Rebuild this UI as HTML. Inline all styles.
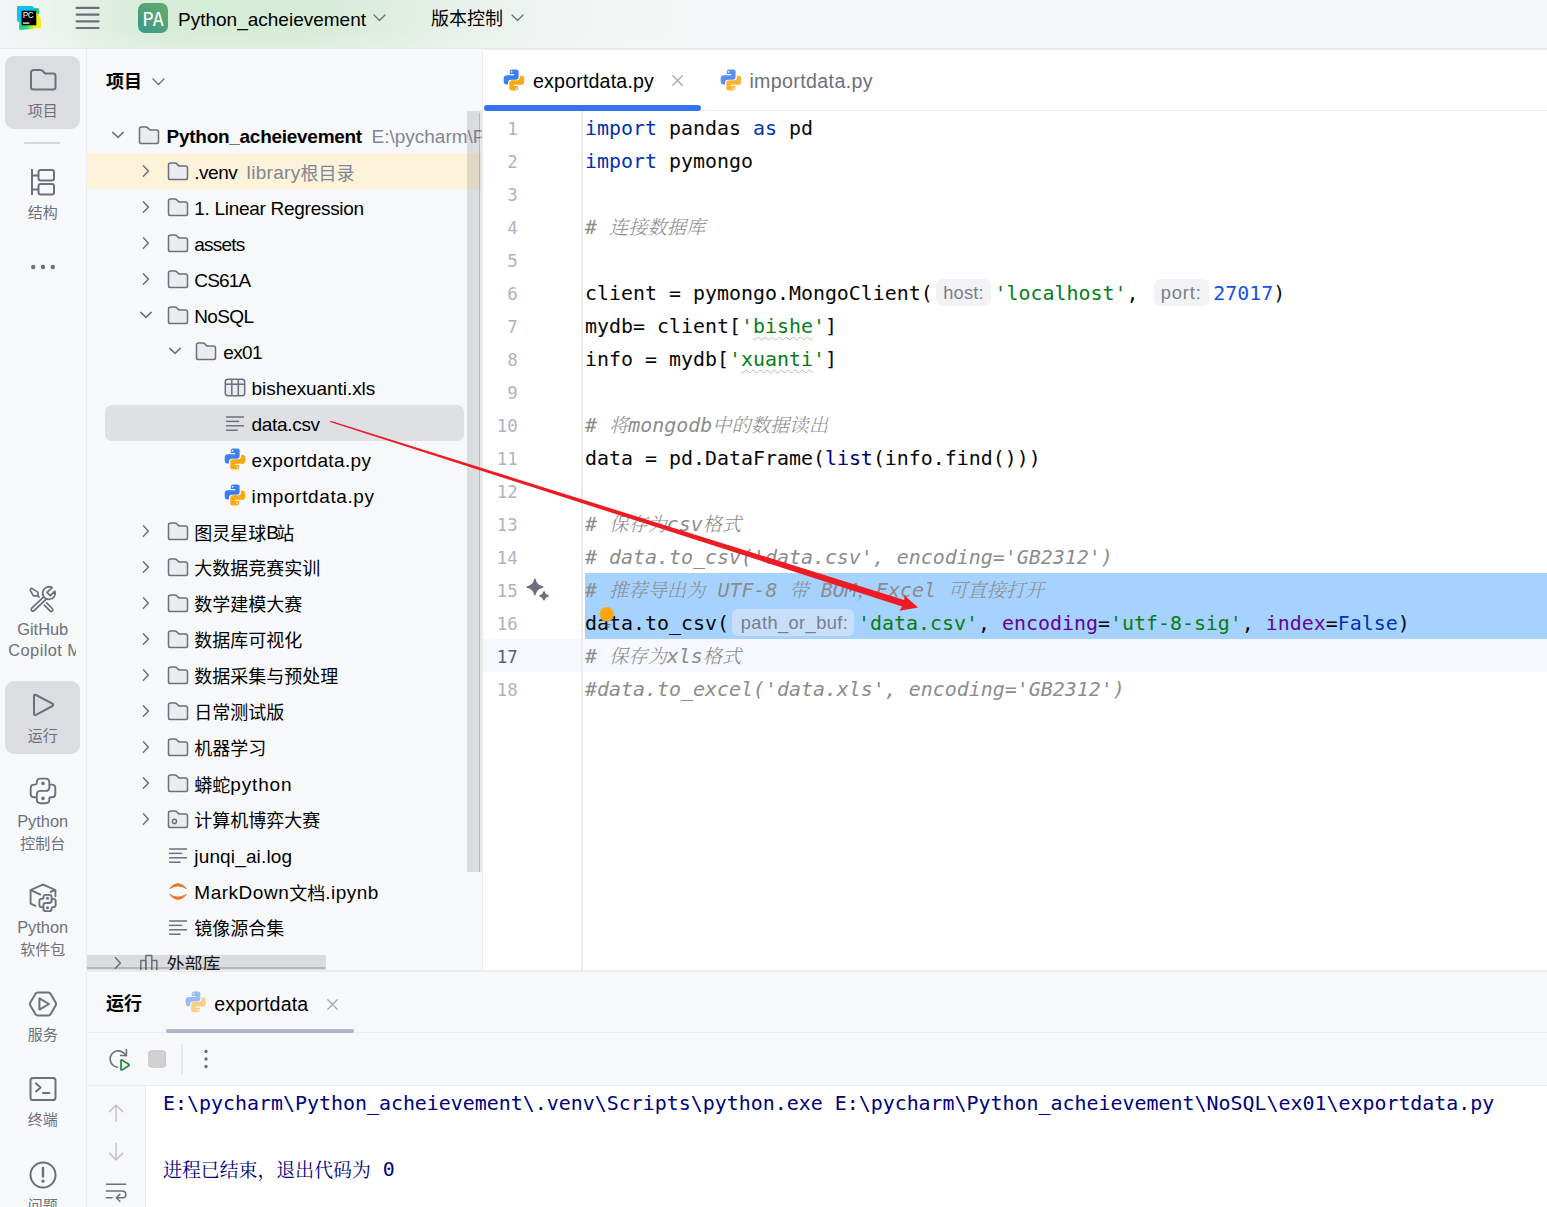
<!DOCTYPE html>
<html lang="zh-CN">
<head>
<meta charset="utf-8">
<title>exportdata.py</title>
<style>
*{box-sizing:border-box;margin:0;padding:0}
html,body{width:1547px;height:1207px;overflow:hidden;background:#f7f8fa}
body{position:relative;font-family:"Liberation Sans","Noto Sans CJK SC",sans-serif;font-size:18px;color:#000}
.abs{position:absolute}
svg{position:absolute;overflow:visible}
/* ---------- top bar ---------- */
#topbar{left:0;top:0;width:1547px;height:48px;background:
 linear-gradient(to bottom,rgba(246,247,249,0) 0%,rgba(246,247,249,0) 60%,rgba(246,247,249,.25) 100%),
 linear-gradient(to right,#f3f5f7 0px,#eef4f0 50px,#e3f0e5 90px,#d9edda 135px,#d5ecd7 200px,#d6ecd8 300px,#deeee0 390px,#e8f1ea 460px,#f0f4f2 540px,#f4f6f6 620px,#f5f6f7 700px,#f5f6f8 1547px)}
#topline{left:0;top:48px;width:1547px;height:1.2px;background:#e7e8ed}
#topline2{left:483px;top:49px;width:1064px;height:1px;background:#ebecf0}
.tb-txt{top:0;height:38px;line-height:39.2px;white-space:nowrap}
/* ---------- left strip ---------- */
#strip{left:0;top:49px;width:87px;height:1158px;background:#f7f8fa;border-right:1px solid #ebecf0}
.sbtn{left:5px;width:75px;border-radius:9px;background:#dcdde0}
.slbl{left:-0.8px;width:87px;text-align:center;color:#6c707e;font-size:15px;line-height:21px;white-space:nowrap;overflow:hidden}
/* ---------- project panel ---------- */
#proj{left:87px;top:50px;width:396px;height:920px;background:#f7f8fa;border-right:1px solid #ebecf0;overflow:hidden;box-shadow:0 -1px 0 #f7f8fa}
.row{position:absolute;left:0;width:396px;height:36px;line-height:35px;white-space:nowrap;font-size:18px}
.row .t{position:absolute;top:1.5px}
.row .l{font-size:19px}
.row .c{font-size:18px;position:relative;top:1.3px}
.row .b{font-weight:700}
.gray{color:#818594}
/* ---------- editor ---------- */
#editor{left:483px;top:50px;width:1064px;height:920px;background:#fff}
#tabline{left:483px;top:110px;width:1064px;height:1px;background:#ebecf0}
.tab{top:50px;height:60px;line-height:62.6px;font-size:19.6px;white-space:nowrap}
#gutline{left:581px;top:111px;width:2px;height:859px;background:#ebecf0}
.ln{position:absolute;left:469.2px;width:48.6px;text-align:right;height:33px;line-height:36.2px;font-family:"DejaVu Sans Mono","Liberation Mono",monospace;font-size:17.4px;color:#aeb3c2;letter-spacing:0;white-space:pre}
.cl{position:absolute;left:585px;height:33px;line-height:36.2px;white-space:pre;font-family:"DejaVu Sans Mono","Liberation Mono",monospace;font-size:19.93px;color:#080808}
.kw{color:#0033b3}.st{color:#067d17}.nu{color:#1750eb}.na{color:#660099}.bi{color:#000080}
.cm{color:#8c8c8c;font-style:italic}
.zh{font-family:"Noto Serif CJK SC",serif;font-size:19.3px;font-weight:300;letter-spacing:0;line-height:1px}
.wv{text-decoration:underline wavy #9fcb9d 1px;text-underline-offset:3.2px;text-decoration-skip-ink:none}
.hint{display:inline-block;vertical-align:top;height:26.6px;line-height:27.6px;margin:3px 4.5px 0 3.2px;border-radius:6px;background:#f2f3f5;color:#7a7e8a;font-family:"Liberation Sans",sans-serif;font-size:18.3px;font-style:normal;text-align:center;overflow:hidden}
.hint.hs{background:#c8dffb;margin-top:2.8px;height:27.2px;line-height:28px;padding-left:3.4px}
/* ---------- bottom panel ---------- */
#bottom{left:87px;top:969.6px;width:1460px;height:238px;background:#f7f8fa;border-top:2px solid #ebecf0}
.con{position:absolute;left:163px;height:33px;line-height:36.2px;white-space:pre;font-family:"DejaVu Sans Mono","Liberation Mono",monospace;font-size:19.93px;color:#00007f}
.czh{font-family:"Noto Serif CJK SC",serif;font-size:18.9px;font-weight:400;line-height:1px;position:relative;top:1px}
</style>
</head>
<body>

<!-- ================= TOP BAR ================= -->
<div id="topbar" class="abs"></div>
<div id="topline" class="abs"></div>
<div id="topline2" class="abs"></div>

<!-- PyCharm logo -->
<svg style="left:0;top:0" width="48" height="36" viewBox="0 0 48 36">
  <defs>
    <linearGradient id="pcg2" x1="19" y1="28" x2="41" y2="22" gradientUnits="userSpaceOnUse"><stop offset="0" stop-color="#12d48a"/><stop offset=".3" stop-color="#21d789"/><stop offset=".62" stop-color="#e6f31c"/><stop offset="1" stop-color="#f7f014"/></linearGradient>
  </defs>
  <path d="M20 9 Q20 8 21 8 L37.5 8 Q39 8 39 9.5 L39 14 L40.6 18.5 Q41 19.5 41 20.5 L41 27 Q41 28 40 28.1 L21 29.9 Q19 30 19 28.5 Z" fill="url(#pcg2)"/>
  <path d="M33 8 L37.5 8 Q39 8 39 9.5 L39 15 L36 12 Z" fill="#14d58b"/>
  <path d="M18.2 6 L31.6 6 Q32.6 6 33.2 6.8 L34.3 8.3 L36 11 L36 14 L22 22.5 L19.5 22 L18 21.4 Q17 20.8 17 19.8 L17 7.2 Q17 6 18.2 6 Z" fill="#08c3f2"/>
  <rect x="21.6" y="10.7" width="14.7" height="14.6" fill="#000"/>
  <text x="22.8" y="17.9" font-family="Liberation Sans,sans-serif" font-weight="400" font-size="8.3" fill="#fff" letter-spacing="-0.5">PC</text>
  <rect x="23" y="22.3" width="6.4" height="1.6" fill="#cfcfcf"/>
</svg>

<!-- hamburger -->
<svg style="left:0;top:0" width="120" height="36" viewBox="0 0 120 36">
  <g stroke="#6c707e" stroke-width="2.2" stroke-linecap="round">
    <line x1="76.6" y1="7.9" x2="98.6" y2="7.9"/><line x1="76.6" y1="14.6" x2="98.6" y2="14.6"/>
    <line x1="76.6" y1="21.3" x2="98.6" y2="21.3"/><line x1="76.6" y1="28" x2="98.6" y2="28"/>
  </g>
</svg>

<!-- PA badge -->
<svg style="left:138px;top:3px" width="30" height="30" viewBox="0 0 30 30">
  <defs><linearGradient id="pag" x1="0" y1="1" x2="1" y2="0"><stop offset="0" stop-color="#3b978f"/><stop offset="1" stop-color="#63ad67"/></linearGradient></defs>
  <rect x="0" y="0" width="30" height="30" rx="7" fill="url(#pag)"/>
  <text x="4.2" y="23.2" font-family="DejaVu Sans Mono,Liberation Mono,monospace" font-size="19" fill="#fff" textLength="21.8" lengthAdjust="spacing">PA</text>
</svg>

<div class="abs tb-txt" style="left:178px;font-size:19px">Python_acheievement</div>
<svg style="left:373px;top:14px" width="13" height="8" viewBox="0 0 13 8"><path d="M1 1 L6.5 6.5 L12 1" fill="none" stroke="#6c707e" stroke-width="1.4" stroke-linecap="round" stroke-linejoin="round"/></svg>
<div class="abs tb-txt" style="left:431px;font-size:18px">版本控制</div>
<svg style="left:511px;top:14px" width="13" height="8" viewBox="0 0 13 8"><path d="M1 1 L6.5 6.5 L12 1" fill="none" stroke="#6c707e" stroke-width="1.4" stroke-linecap="round" stroke-linejoin="round"/></svg>

<!-- ================= LEFT STRIP ================= -->
<div id="strip" class="abs"></div>

<div class="abs sbtn" style="top:55.6px;height:73px"></div>
<div class="abs sbtn" style="top:681px;height:73px"></div>
<svg style="left:0;top:50px" width="87" height="1157" viewBox="0 50 87 1157" fill="none" stroke="#6c707e" stroke-width="2" stroke-linecap="round" stroke-linejoin="round">
  <!-- project folder -->
  <path d="M31 72.5 Q31 70 33.5 70 L40.5 70 Q41.6 70 42.4 70.8 L44.6 73 Q45.2 73.6 46.2 73.6 L53 73.6 Q55.5 73.6 55.5 76 L55.5 87 Q55.5 89.5 53 89.5 L33.5 89.5 Q31 89.5 31 87 Z"/>
  <!-- separator -->
  <line x1="24.2" y1="143" x2="59.8" y2="143" stroke="#c9ccd6" stroke-width="1.6" stroke-linecap="butt"/>
  <!-- structure -->
  <path d="M32 169 L32 195 M32 175.5 L38.5 175.5 M32 189.5 L38.5 189.5" stroke-linecap="butt"/>
  <rect x="38.5" y="170" width="15.5" height="10.5" rx="2.2"/>
  <rect x="38.5" y="184" width="15.5" height="10.5" rx="2.2"/>
  <!-- dots -->
  <g fill="#6c707e" stroke="none"><circle cx="33.2" cy="267" r="2.2"/><circle cx="43" cy="267" r="2.2"/><circle cx="52.8" cy="267" r="2.2"/></g>
  <!-- tools: wrench + screwdriver -->
  <g>
    <line x1="44.6" y1="598.4" x2="32.9" y2="609.4" stroke="#6c707e" stroke-width="5.1"/>
    <line x1="46" y1="597" x2="32.9" y2="609.4" stroke="#f7f8fa" stroke-width="1.7"/>
    <path d="M52.2 587.7 L47 592.4 L50.3 595.7 L54.9 591.1 A6.3 6.3 0 1 1 52.2 587.7 Z" fill="#f7f8fa" stroke-width="1.8"/>
    <path d="M46.1 602.3 L52.3 608.5 A1.6 1.6 0 0 1 50 610.8 L43.8 604.6" stroke-width="1.7" stroke-linecap="butt"/>
    <path d="M31.8 588.4 L37.5 591.9 Q38 592.2 38 592.8 L38 595.9 L34 595.9 Q33.4 595.9 33.1 595.4 L30.4 590.6 Q29.7 589.2 31.8 588.4 Z M38 595.9 L39 597" stroke-width="1.7"/>
  </g>
  <!-- run play -->
  <path d="M34 696.2 Q34 694 36 695 L52.4 703.6 Q54.2 704.8 52.4 706 L36 714.8 Q34 715.8 34 713.6 Z"/>
  <!-- python console -->
  <g transform="translate(43,790.9)" stroke-width="1.9">
    <path d="M-9 -6.3 L-7.7 -6.3 Q-6.2 -6.3 -6.2 -7.8 L-6.2 -8.6 Q-6.2 -12.3 -2.5 -12.3 L2.6 -12.3 Q6.3 -12.3 6.3 -8.6 L6.3 -3.7 Q6.3 0 2.6 0 L-2.5 0 Q-6.2 0 -6.2 3.7 L-6.2 8.6 Q-6.2 12.3 -2.5 12.3 L2.6 12.3 Q6.3 12.3 6.3 8.6 L6.3 7.8 Q6.3 6.3 7.8 6.3 L9 6.3 Q12.3 6.3 12.3 3 L12.3 -3 Q12.3 -6.3 9 -6.3 L6.3 -6.3 M-9 -6.3 Q-12.3 -6.3 -12.3 -3 L-12.3 3 Q-12.3 6.3 -9 6.3 L-6.2 6.3"/>
    <circle cx="0" cy="-7.5" r="1.8" fill="#6c707e" stroke="none"/><circle cx="0" cy="7.5" r="1.8" fill="#6c707e" stroke="none"/>
  </g>
  <!-- python packages -->
  <g stroke-width="1.9">
    <path d="M35.4 905.8 L30.6 903.6 L30.6 890 L43 884.6 L55.4 890 L55.4 896.2" stroke-linejoin="miter"/>
    <path d="M30.8 890.1 L41 894.8 M55.2 890.1 L50 892" stroke-linecap="butt"/>
    <g transform="translate(47.5,903) scale(.66)" stroke-width="2.9">
      <path d="M-9 -6.3 L-7.7 -6.3 Q-6.2 -6.3 -6.2 -7.8 L-6.2 -8.6 Q-6.2 -12.3 -2.5 -12.3 L2.6 -12.3 Q6.3 -12.3 6.3 -8.6 L6.3 -3.7 Q6.3 0 2.6 0 L-2.5 0 Q-6.2 0 -6.2 3.7 L-6.2 8.6 Q-6.2 12.3 -2.5 12.3 L2.6 12.3 Q6.3 12.3 6.3 8.6 L6.3 7.8 Q6.3 6.3 7.8 6.3 L9 6.3 Q12.3 6.3 12.3 3 L12.3 -3 Q12.3 -6.3 9 -6.3 L6.3 -6.3 M-9 -6.3 Q-12.3 -6.3 -12.3 -3 L-12.3 3 Q-12.3 6.3 -9 6.3 L-6.2 6.3"/>
      <circle cx="0" cy="-7.1" r="2.3" fill="#6c707e" stroke="none"/><circle cx="0" cy="7.1" r="2.3" fill="#6c707e" stroke="none"/>
    </g>
  </g>
  <!-- services -->
  <path d="M37.6 992.6 L48.4 992.6 Q49.8 992.6 50.5 993.8 L55.8 1002.8 Q56.5 1004 55.8 1005.2 L50.5 1014.2 Q49.8 1015.4 48.4 1015.4 L37.6 1015.4 Q36.2 1015.4 35.5 1014.2 L30.2 1005.2 Q29.5 1004 30.2 1002.8 L35.5 993.8 Q36.2 992.6 37.6 992.6 Z"/>
  <path d="M39.4 998.4 L39.4 1009.6 L49 1004 Z"/>
  <!-- terminal -->
  <rect x="30.5" y="1078" width="25" height="22" rx="2.6"/>
  <path d="M36 1083.4 L40.6 1087.4 L36 1091.4 M43 1093 L49.4 1093"/>
  <!-- problems -->
  <circle cx="43" cy="1175" r="12.5"/>
  <path d="M43 1168 L43 1176.4" stroke-width="2.4"/><circle cx="43" cy="1181.2" r="1.6" fill="#6c707e" stroke="none"/>
</svg>
<div class="abs slbl" style="top:100px">项目</div>
<div class="abs slbl" style="top:201.5px">结构</div>
<div class="abs slbl" style="top:619px;font-size:16.4px">GitHub</div>
<div class="abs slbl" style="top:640px;left:0;font-size:16.4px;width:76.4px;text-align:left;padding-left:8.3px;letter-spacing:.42px">Copilot M</div>
<div class="abs slbl" style="top:724.5px">运行</div>
<div class="abs slbl" style="top:811px;font-size:16.4px">Python</div>
<div class="abs slbl" style="top:832.5px">控制台</div>
<div class="abs slbl" style="top:917px;font-size:16.4px">Python</div>
<div class="abs slbl" style="top:938.5px">软件包</div>
<div class="abs slbl" style="top:1024px">服务</div>
<div class="abs slbl" style="top:1109px">终端</div>
<div class="abs slbl" style="top:1195.2px">问题</div>
<!--STRIP-->

<!-- ================= PROJECT PANEL ================= -->
<div id="proj" class="abs">
<div class="abs" style="left:19px;top:17.7px;height:28px;line-height:28px;font-size:18px;font-weight:700">项目</div>
<svg style="left:65px;top:27.8px" width="13" height="8" viewBox="0 0 13 8"><path d="M1 1 L6.5 6.5 L12 1" fill="none" stroke="#6c707e" stroke-width="1.4" stroke-linecap="round" stroke-linejoin="round"/></svg>
<!--PROJ-->
<svg width="0" height="0" style="position:absolute"><defs>
<symbol id="i-folder" viewBox="0 0 22 19"><path d="M1.5 3.1 Q1.5 1 3.6 1 L8 1 Q8.9 1 9.5 1.6 L11.3 3.4 Q12 4.1 13 4.1 L18.4 4.1 Q20.5 4.1 20.5 6.2 L20.5 15.4 Q20.5 17.5 18.4 17.5 L3.6 17.5 Q1.5 17.5 1.5 15.4 Z" fill="#ebecf0" stroke="#6c707e" stroke-width="1.5" stroke-linejoin="round"/></symbol>
<symbol id="i-folderdot" viewBox="0 0 22 19"><path d="M1.5 3.1 Q1.5 1 3.6 1 L8 1 Q8.9 1 9.5 1.6 L11.3 3.4 Q12 4.1 13 4.1 L18.4 4.1 Q20.5 4.1 20.5 6.2 L20.5 15.4 Q20.5 17.5 18.4 17.5 L3.6 17.5 Q1.5 17.5 1.5 15.4 Z" fill="#ebecf0" stroke="#6c707e" stroke-width="1.5" stroke-linejoin="round"/><circle cx="7.4" cy="11.4" r="2.1" fill="none" stroke="#6c707e" stroke-width="1.4"/></symbol>
<symbol id="i-py" viewBox="0 0 22 22"><path id="pyhalf" d="M6.8 2.7 Q6.8 0.5 9.6 0.5 L12.8 0.5 Q15.6 0.5 15.6 2.7 L15.6 8 Q15.6 10.8 12.6 10.8 L8.3 10.8 Q5 10.8 5 13.6 L5 15.4 L3.3 15.4 Q0.7 15.4 0.7 12.2 L0.7 9.8 Q0.7 6.2 3.7 6.2 L11.1 6.2 L11.1 5 L6.8 5 Z" fill="#3d7ef4"/><circle cx="8.6" cy="2.75" r=".85" fill="#fff"/><path d="M6.8 2.7 Q6.8 0.5 9.6 0.5 L12.8 0.5 Q15.6 0.5 15.6 2.7 L15.6 8 Q15.6 10.8 12.6 10.8 L8.3 10.8 Q5 10.8 5 13.6 L5 15.4 L3.3 15.4 Q0.7 15.4 0.7 12.2 L0.7 9.8 Q0.7 6.2 3.7 6.2 L11.1 6.2 L11.1 5 L6.8 5 Z" fill="#fea70f" transform="rotate(180 10.96 11.03)"/><circle cx="13.35" cy="19.3" r=".85" fill="#fff"/></symbol>
<symbol id="i-lines" viewBox="0 0 22 19"><g stroke="#6c707e" stroke-width="1.5" stroke-linecap="butt"><line x1="2" y1="3" x2="20" y2="3"/><line x1="2" y1="7.4" x2="15.2" y2="7.4"/><line x1="2" y1="11.8" x2="20" y2="11.8"/><line x1="2" y1="16.2" x2="13.6" y2="16.2"/></g></symbol>
<symbol id="i-table" viewBox="0 0 22 19"><g fill="none" stroke="#6c707e" stroke-width="1.5"><rect x="1.3" y="1.3" width="19.4" height="16.4" rx="2.6" fill="#ebecf0"/><path d="M1.3 6.2 L20.7 6.2 M7.8 1.3 L7.8 17.7 M14.3 1.3 L14.3 17.7"/></g></symbol>
<symbol id="i-jup" viewBox="0 0 22 19"><g fill="#e8742a" stroke="#e8742a" stroke-width=".8" stroke-linejoin="round"><path d="M2.6 6.6 Q11 -3.4 19.4 6.6 Q11 1.4 2.6 6.6 Z"/><path d="M2.6 12.4 Q11 22.4 19.4 12.4 Q11 17.6 2.6 12.4 Z"/></g></symbol>
<symbol id="i-lib" viewBox="0 0 22 19"><g fill="none" stroke="#6c707e" stroke-width="1.5" stroke-linejoin="round"><path d="M1 18.5 L21 18.5"/><rect x="2.8" y="6.5" width="5" height="12"/><rect x="7.8" y="1.5" width="6" height="17"/><path d="M13.8 6.5 L18.8 6.5 L18.8 18.5"/></g></symbol>
<symbol id="i-chr" viewBox="0 0 8 14"><path d="M1.4 1.8 L6.4 7 L1.4 12.2" fill="none" stroke="#6c707e" stroke-width="1.5" stroke-linecap="round" stroke-linejoin="round"/></symbol>
<symbol id="i-chd" viewBox="0 0 14 8"><path d="M1.8 1.4 L7 6.4 L12.2 1.4" fill="none" stroke="#6c707e" stroke-width="1.5" stroke-linecap="round" stroke-linejoin="round"/></symbol>
</defs></svg>
<div class="abs" style="left:0;top:103px;width:396px;height:36px;background:#fdf3da"></div>
<div class="abs" style="left:18px;top:355px;width:359px;height:36px;border-radius:7px;background:#dfe0e4"></div>
<div class="row" style="top:67px"><svg style="left:24.0px;top:14.4px" width="14" height="8"><use href="#i-chd"/></svg><svg style="left:51.4px;top:8.6px" width="22" height="19"><use href="#i-folder"/></svg><span class="t" style="left:79.6px"><span class="l b" style="letter-spacing:-0.28px">Python_acheievement</span><span style="display:inline-block;width:9.6px"></span><span class="l gray">E:\pycharm\Python_acheievement</span></span></div>
<div class="row" style="top:103px"><svg style="left:55.0px;top:11px" width="8" height="14"><use href="#i-chr"/></svg><svg style="left:80.4px;top:8.6px" width="22" height="19"><use href="#i-folder"/></svg><span class="t" style="left:107.3px"><span class="l" style="letter-spacing:-0.48px">.venv</span><span style="display:inline-block;width:9.3px"></span><span class="l gray" style="letter-spacing:0.32px">library</span><span class="c gray">根目录</span></span></div>
<div class="row" style="top:139px"><svg style="left:55.0px;top:11px" width="8" height="14"><use href="#i-chr"/></svg><svg style="left:80.4px;top:8.6px" width="22" height="19"><use href="#i-folder"/></svg><span class="t" style="left:107.3px"><span class="l" style="letter-spacing:-0.29px">1. Linear Regression</span></span></div>
<div class="row" style="top:175px"><svg style="left:55.0px;top:11px" width="8" height="14"><use href="#i-chr"/></svg><svg style="left:80.4px;top:8.6px" width="22" height="19"><use href="#i-folder"/></svg><span class="t" style="left:107.3px"><span class="l" style="letter-spacing:-0.77px">assets</span></span></div>
<div class="row" style="top:211px"><svg style="left:55.0px;top:11px" width="8" height="14"><use href="#i-chr"/></svg><svg style="left:80.4px;top:8.6px" width="22" height="19"><use href="#i-folder"/></svg><span class="t" style="left:107.3px"><span class="l" style="letter-spacing:-0.80px">CS61A</span></span></div>
<div class="row" style="top:247px"><svg style="left:51.8px;top:14.4px" width="14" height="8"><use href="#i-chd"/></svg><svg style="left:80.4px;top:8.6px" width="22" height="19"><use href="#i-folder"/></svg><span class="t" style="left:107.3px"><span class="l" style="letter-spacing:-0.66px">NoSQL</span></span></div>
<div class="row" style="top:283px"><svg style="left:81.0px;top:14.4px" width="14" height="8"><use href="#i-chd"/></svg><svg style="left:108.4px;top:8.6px" width="22" height="19"><use href="#i-folder"/></svg><span class="t" style="left:136.3px"><span class="l" style="letter-spacing:-0.68px">ex01</span></span></div>
<div class="row" style="top:319px"><svg style="left:136.8px;top:8.6px" width="22" height="19"><use href="#i-table"/></svg><span class="t" style="left:164.6px"><span class="l" style="letter-spacing:-0.07px">bishexuanti.xls</span></span></div>
<div class="row" style="top:355px"><svg style="left:136.8px;top:8.6px" width="22" height="19"><use href="#i-lines"/></svg><span class="t" style="left:164.6px"><span class="l" style="letter-spacing:-0.32px">data.csv</span></span></div>
<div class="row" style="top:391px"><svg style="left:136.8px;top:7px" width="22" height="22"><use href="#i-py"/></svg><span class="t" style="left:164.6px"><span class="l" style="letter-spacing:0.35px">exportdata.py</span></span></div>
<div class="row" style="top:427px"><svg style="left:136.8px;top:7px" width="22" height="22"><use href="#i-py"/></svg><span class="t" style="left:164.6px"><span class="l" style="letter-spacing:0.61px">importdata.py</span></span></div>
<div class="row" style="top:463px"><svg style="left:55.0px;top:11px" width="8" height="14"><use href="#i-chr"/></svg><svg style="left:80.4px;top:8.6px" width="22" height="19"><use href="#i-folder"/></svg><span class="t" style="left:107.3px"><span class="c">图灵星球</span><span class="l" style="letter-spacing:-2.69px">B</span><span class="c">站</span></span></div>
<div class="row" style="top:499px"><svg style="left:55.0px;top:11px" width="8" height="14"><use href="#i-chr"/></svg><svg style="left:80.4px;top:8.6px" width="22" height="19"><use href="#i-folder"/></svg><span class="t" style="left:107.3px"><span class="c">大数据竞赛实训</span></span></div>
<div class="row" style="top:535px"><svg style="left:55.0px;top:11px" width="8" height="14"><use href="#i-chr"/></svg><svg style="left:80.4px;top:8.6px" width="22" height="19"><use href="#i-folder"/></svg><span class="t" style="left:107.3px"><span class="c">数学建模大赛</span></span></div>
<div class="row" style="top:571px"><svg style="left:55.0px;top:11px" width="8" height="14"><use href="#i-chr"/></svg><svg style="left:80.4px;top:8.6px" width="22" height="19"><use href="#i-folder"/></svg><span class="t" style="left:107.3px"><span class="c">数据库可视化</span></span></div>
<div class="row" style="top:607px"><svg style="left:55.0px;top:11px" width="8" height="14"><use href="#i-chr"/></svg><svg style="left:80.4px;top:8.6px" width="22" height="19"><use href="#i-folder"/></svg><span class="t" style="left:107.3px"><span class="c">数据采集与预处理</span></span></div>
<div class="row" style="top:643px"><svg style="left:55.0px;top:11px" width="8" height="14"><use href="#i-chr"/></svg><svg style="left:80.4px;top:8.6px" width="22" height="19"><use href="#i-folder"/></svg><span class="t" style="left:107.3px"><span class="c">日常测试版</span></span></div>
<div class="row" style="top:679px"><svg style="left:55.0px;top:11px" width="8" height="14"><use href="#i-chr"/></svg><svg style="left:80.4px;top:8.6px" width="22" height="19"><use href="#i-folder"/></svg><span class="t" style="left:107.3px"><span class="c">机器学习</span></span></div>
<div class="row" style="top:715px"><svg style="left:55.0px;top:11px" width="8" height="14"><use href="#i-chr"/></svg><svg style="left:80.4px;top:8.6px" width="22" height="19"><use href="#i-folder"/></svg><span class="t" style="left:107.3px"><span class="c">蟒蛇</span><span class="l" style="letter-spacing:0.83px">python</span></span></div>
<div class="row" style="top:751px"><svg style="left:55.0px;top:11px" width="8" height="14"><use href="#i-chr"/></svg><svg style="left:80.4px;top:8.6px" width="22" height="19"><use href="#i-folderdot"/></svg><span class="t" style="left:107.3px"><span class="c">计算机博弈大赛</span></span></div>
<div class="row" style="top:787px"><svg style="left:80.4px;top:8.6px" width="22" height="19"><use href="#i-lines"/></svg><span class="t" style="left:107.3px"><span class="l" style="letter-spacing:0.15px">junqi_ai.log</span></span></div>
<div class="row" style="top:823px"><svg style="left:80.4px;top:8.6px" width="22" height="19"><use href="#i-jup"/></svg><span class="t" style="left:107.3px"><span class="l" style="letter-spacing:0.52px">MarkDown</span><span class="c">文档</span><span class="l" style="letter-spacing:0.47px">.ipynb</span></span></div>
<div class="row" style="top:859px"><svg style="left:80.4px;top:8.6px" width="22" height="19"><use href="#i-lines"/></svg><span class="t" style="left:107.3px"><span class="c">镜像源合集</span></span></div>
<div class="row" style="top:895px"><svg style="left:27.2px;top:11px" width="8" height="14"><use href="#i-chr"/></svg><svg style="left:51.4px;top:8.6px" width="22" height="19"><use href="#i-lib"/></svg><span class="t" style="left:79.6px"><span class="c">外部库</span></span></div>
<div class="abs" style="left:380px;top:61px;width:15px;height:761px;background:rgba(110,110,116,.2);border-right:2px solid rgba(255,255,255,.35)"><div class="abs" style="right:0;top:2px;width:1.5px;height:759px;background:rgba(60,60,66,.22)"></div></div>
<div class="abs" style="left:0;top:905px;width:238.8px;height:14.6px;background:rgba(110,110,116,.2)"><div class="abs" style="left:0;bottom:1px;width:238px;height:1.5px;background:rgba(60,60,66,.22)"></div></div>
<!--/PROJ-->
</div>

<!-- ================= EDITOR ================= -->
<div id="editor" class="abs"></div>
<!--TABS-->
<div id="tabline" class="abs"></div>
<div class="abs" style="left:483.5px;top:104.6px;width:217.5px;height:6px;border-radius:3px;background:#3574f0"></div>
<svg style="left:503px;top:69px" width="22" height="22"><use href="#i-py"/></svg>
<div class="abs tab" style="left:533px;letter-spacing:.18px">exportdata.py</div>
<svg style="left:672px;top:75px" width="11" height="11" viewBox="0 0 11 11"><path d="M0.8 0.8 L10.2 10.2 M10.2 0.8 L0.8 10.2" stroke="#a3a7b5" stroke-width="1.3" stroke-linecap="round"/></svg>
<svg style="left:719.5px;top:69px;opacity:.86" width="22" height="22"><use href="#i-py"/></svg>
<div class="abs tab" style="left:749.4px;letter-spacing:.37px;color:#6c707e">importdata.py</div>
<!--/TABS-->
<!--EDITOR-->
<div class="abs" style="left:483px;top:639px;width:1064px;height:33px;background:#f5f8fe"></div>
<div class="abs" style="left:585px;top:573.4px;width:962px;height:65.4px;background:#a6d2ff"></div>
<div id="gutline" class="abs"></div>
<div class="ln" style="top:111px">1</div>
<div class="cl" style="top:111px"><span class="kw">import</span> pandas <span class="kw">as</span> pd</div>
<div class="ln" style="top:144px">2</div>
<div class="cl" style="top:144px"><span class="kw">import</span> pymongo</div>
<div class="ln" style="top:177px">3</div>
<div class="ln" style="top:210px">4</div>
<div class="cl" style="top:210px"><span class="cm"># <span class="zh">连接数据库</span></span></div>
<div class="ln" style="top:243px">5</div>
<div class="ln" style="top:276px">6</div>
<div class="cl" style="top:276px">client = pymongo.MongoClient(<span class="hint" style="width:55px;letter-spacing:0.2px;margin-right:3.5px">host:</span><span class="st">'localhost'</span>, <span class="hint" style="width:55.2px;letter-spacing:0.85px">port:</span><span class="nu">27017</span>)</div>
<div class="ln" style="top:309px">7</div>
<div class="cl" style="top:309px">mydb= client[<span class="st">'<span class="wv">bishe</span>'</span>]</div>
<div class="ln" style="top:342px">8</div>
<div class="cl" style="top:342px">info = mydb[<span class="st">'<span class="wv">xuanti</span>'</span>]</div>
<div class="ln" style="top:375px">9</div>
<div class="ln" style="top:408px">10</div>
<div class="cl" style="top:408px"><span class="cm"># <span class="zh">将</span>mongodb<span class="zh">中的数据读出</span></span></div>
<div class="ln" style="top:441px">11</div>
<div class="cl" style="top:441px">data = pd.DataFrame(<span class="bi">list</span>(info.find()))</div>
<div class="ln" style="top:474px">12</div>
<div class="ln" style="top:507px">13</div>
<div class="cl" style="top:507px"><span class="cm"># <span class="zh">保存为</span>csv<span class="zh">格式</span></span></div>
<div class="ln" style="top:540px">14</div>
<div class="cl" style="top:540px"><span class="cm"># data.to_csv('data.csv', encoding='GB2312')</span></div>
<div class="ln" style="top:573px">15</div>
<div class="cl" style="top:573px"><span class="cm"># <span class="zh">推荐导出为</span> UTF-8 <span class="zh">带</span> BOM<span class="zh">，</span>Excel <span class="zh">可直接打开</span></span></div>
<div class="ln" style="top:606px">16</div>
<div class="cl" style="top:606px">data.to_csv(<span class="hint hs" style="width:121.4px;letter-spacing:0.4px">path_or_buf:</span><span class="st">'data.csv'</span>, <span class="na">encoding</span>=<span class="st">'utf-8-sig'</span>, <span class="na">index</span>=<span class="kw">False</span>)</div>
<div class="ln" style="top:639px;color:#5a5d6b">17</div>
<div class="cl" style="top:639px"><span class="cm"># <span class="zh">保存为</span>xls<span class="zh">格式</span></span></div>
<div class="ln" style="top:672px">18</div>
<div class="cl" style="top:672px"><span class="cm">#data.to_excel('data.xls', encoding='GB2312')</span></div>
<!--/EDITOR-->

<!-- ================= BOTTOM PANEL ================= -->
<div id="bottom" class="abs"></div>
<!--BOTTOM-->
<div class="abs" style="left:87px;top:1032px;width:1460px;height:1px;background:#ebecf0"></div>
<div class="abs" style="left:87px;top:1085px;width:1460px;height:1px;background:#ebecf0"></div>
<div class="abs" style="left:146px;top:1086px;width:1401px;height:121px;background:#fff"></div>
<div class="abs" style="left:145px;top:1086px;width:1px;height:121px;background:#ebecf0"></div>
<div class="abs" style="left:106px;top:989px;height:30px;line-height:30px;font-size:18px;font-weight:700">运行</div>
<svg style="left:185.4px;top:991.2px;opacity:.5" width="21.6" height="21.6" viewBox="0 0 22 22"><use href="#i-py"/></svg>
<div class="abs" style="left:214.3px;top:989px;height:30px;line-height:31.6px;font-size:19.6px;letter-spacing:.14px;white-space:nowrap">exportdata</div>
<svg style="left:326.6px;top:998.8px" width="11" height="11" viewBox="0 0 11 11"><path d="M0.8 0.8 L10.2 10.2 M10.2 0.8 L0.8 10.2" stroke="#a3a7b5" stroke-width="1.3" stroke-linecap="round"/></svg>
<div class="abs" style="left:165.6px;top:1028.8px;width:188.8px;height:4.2px;border-radius:2.1px;background:#afb3c4"></div>
<svg style="left:87px;top:1033px" width="200" height="52" viewBox="87 1033 200 52" fill="none" stroke-linecap="round" stroke-linejoin="round">
  <!-- rerun -->
  <path d="M117.5 1067.2 A8.2 8.2 0 1 1 125.8 1055.7" stroke="#6c707e" stroke-width="1.6"/>
  <path d="M119.9 1055.5 L126.4 1055.5 L126.4 1049" stroke="#6c707e" stroke-width="1.6" stroke-linecap="butt" stroke-linejoin="miter"/>
  <path d="M121 1060.8 L121 1069.3 Q121 1070.6 122.1 1069.9 L128.7 1065.8 Q129.7 1065 128.7 1064.3 L122.1 1060.1 Q121 1059.5 121 1060.8 Z" stroke="#208a3c" stroke-width="1.7" fill="#eef8ef"/>
  <!-- stop -->
  <rect x="148.8" y="1050.7" width="16.6" height="16.6" rx="3.2" fill="#d1d1d1" stroke="#c6c6c6" stroke-width="1.1"/>
  <!-- separator -->
  <line x1="182" y1="1044" x2="182" y2="1074" stroke="#dddee4" stroke-width="1.4" stroke-linecap="butt"/>
  <!-- kebab -->
  <g fill="#6c707e" stroke="none"><circle cx="206" cy="1051.5" r="1.7"/><circle cx="206" cy="1059" r="1.7"/><circle cx="206" cy="1066.5" r="1.7"/></g>
</svg>
<svg style="left:87px;top:1086px" width="58" height="121" viewBox="87 1086 58 121" fill="none" stroke-linecap="round" stroke-linejoin="round">
  <g stroke="#c6c6c9" stroke-width="1.6">
    <path d="M116.1 1121.4 L116.1 1105 M109.6 1111.6 L116.1 1105 L122.6 1111.6"/>
    <path d="M116.1 1143.4 L116.1 1160 M109.6 1153.4 L116.1 1160 L122.6 1153.4"/>
  </g>
  <g stroke="#6c707e" stroke-width="1.6">
    <path d="M106.4 1184.3 L125.6 1184.3"/>
    <path d="M106.4 1191 L122 1191 Q125.8 1191 125.8 1194.4 Q125.8 1197.8 122 1197.8 L116.6 1197.8 M119.8 1194.4 L116.4 1197.8 L119.8 1201.2"/>
    <path d="M106.4 1197.8 L112 1197.8"/>
  </g>
</svg>
<div class="con" style="top:1086px">E:\pycharm\Python_acheievement\.venv\Scripts\python.exe E:\pycharm\Python_acheievement\NoSQL\ex01\exportdata.py</div>
<div class="con" style="top:1152px"><span class="czh">进程已结束，退出代码为</span> 0</div>
<!--/BOTTOM-->

<!--OVERLAY-->
<svg style="left:0;top:0;pointer-events:none" width="1547" height="1207" viewBox="0 0 1547 1207">
  <!-- AI sparkle in gutter -->
  <path d="M534.9 579.4 Q536.2 585.7 542.6 587 Q536.2 588.3 534.9 594.6 Q533.6 588.3 527.2 587 Q533.6 585.7 534.9 579.4 Z" fill="#6c707e" stroke="#6c707e" stroke-width="1.6" stroke-linejoin="round"/>
  <path d="M544 591.6 Q544.8 595.1 548.3 595.9 Q544.8 596.7 544 600.2 Q543.2 596.7 539.7 595.9 Q543.2 595.1 544 591.6 Z" fill="#6c707e" stroke="#6c707e" stroke-width="1.2" stroke-linejoin="round"/>
  <!-- orange pointer dot -->
  <circle cx="606.9" cy="614.3" r="7.2" fill="#fda70e"/>
  <path d="M604.6 624.6 L610.6 624.6 M605.6 627 L609.6 627" stroke="#30343f" stroke-width="0.9" opacity=".75"/>
  <!-- red annotation arrow -->
  <polygon points="330.5,420.8 904.2,600 904.4,595.6 918.2,607.4 899.4,610.8 902.1,606.4 330.1,421.9" fill="#ed1c24"/>
</svg>
<!--/OVERLAY-->
</body>
</html>
